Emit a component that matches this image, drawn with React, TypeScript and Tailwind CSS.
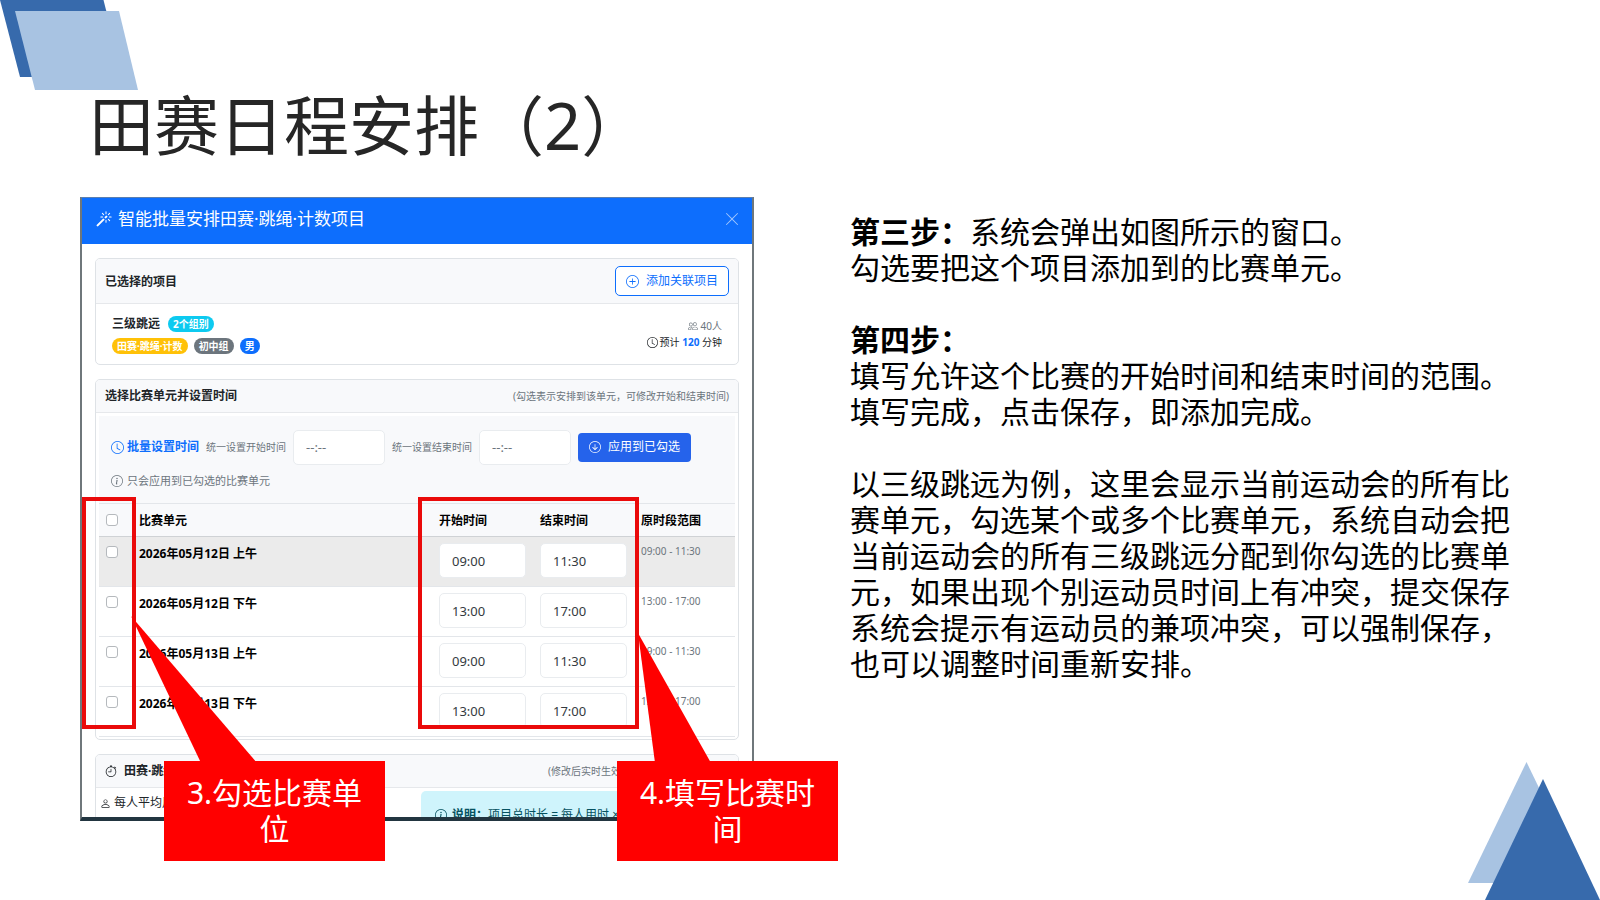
/**
 * App.tsx
 *
 * Training slide "田赛日程安排（2）": the batch scheduling dialog on the left with
 * two red callouts over it, and the written steps on the right.
 */
import { useState } from 'react';
import type { ReactNode } from 'react';
import {
  BsArrowDownCircle,
  BsClock,
  BsInfoCircle,
  BsMagic,
  BsPeople,
  BsPerson,
  BsPlusCircle,
  BsStopwatch,
  BsXLg,
} from 'react-icons/bs';

// ── Types ─────────────────────────────────────────────────────────────────────

interface Session {
  id: string;
  name: string;
  start: string;
  end: string;
  range: string;
}

// ── Data ──────────────────────────────────────────────────────────────────────

const SESSIONS: Session[] = [
  { id: 's1', name: '2026年05月12日 上午', start: '09:00', end: '11:30', range: '09:00 - 11:30' },
  { id: 's2', name: '2026年05月12日 下午', start: '13:00', end: '17:00', range: '13:00 - 17:00' },
  { id: 's3', name: '2026年05月13日 上午', start: '09:00', end: '11:30', range: '09:00 - 11:30' },
  { id: 's4', name: '2026年05月13日 下午', start: '13:00', end: '17:00', range: '13:00 - 17:00' },
];

// ── Small parts ───────────────────────────────────────────────────────────────

function Badge({ className, children }: { className: string; children: ReactNode }) {
  return (
    <span className={`h-4 rounded-full px-[5px] text-[10px] leading-4 font-bold text-white ${className}`}>
      {children}
    </span>
  );
}

function Card({ header, children }: { header: ReactNode; children: ReactNode }) {
  return (
    <section className="overflow-hidden rounded-[5px] border border-[#dee2e6] bg-white">
      <div className="flex min-h-[33px] items-center justify-between border-b border-[#e6e8eb] bg-[#f8f9fb] px-[9px]">
        {header}
      </div>
      {children}
    </section>
  );
}

function TimeInput({ label, defaultValue, placeholder }: { label?: string; defaultValue?: string; placeholder?: string }) {
  return (
    <input
      type="text"
      aria-label={label}
      defaultValue={defaultValue}
      placeholder={placeholder}
      className="block h-[35px] w-full rounded-[5px] border border-[#e9ecef] bg-white px-3 text-[13px] text-[#343a40] placeholder:text-[#6c757d]"
    />
  );
}

function Check({ label, checked, onChange }: { label: string; checked: boolean; onChange: () => void }) {
  return (
    <input
      type="checkbox"
      aria-label={label}
      checked={checked}
      onChange={onChange}
      className="block size-3 appearance-none rounded-[3px] border border-[#b5b9bd] bg-white checked:bg-[#0d6efd]"
    />
  );
}

// ── Dialog ────────────────────────────────────────────────────────────────────

function SessionTable() {
  const [selected, setSelected] = useState<string[]>([]);
  const allSelected = selected.length === SESSIONS.length;

  const toggle = (id: string) => {
    setSelected((prev) => (prev.includes(id) ? prev.filter((s) => s !== id) : [...prev, id]));
  };

  return (
    <table className="w-full table-fixed border-collapse text-left text-xs text-black">
      <colgroup>
        <col className="w-[33px]" />
        <col />
        <col className="w-[101px]" />
        <col className="w-[101px]" />
        <col className="w-[101px]" />
      </colgroup>
      <thead>
        <tr className="h-[33px] border-t border-b border-t-[#e3e6ea] border-b-[#cfd2d5] bg-[#f8f9fb]">
          <th className="px-[7px]">
            <Check
              label="全选"
              checked={allSelected}
              onChange={() => setSelected(allSelected ? [] : SESSIONS.map((s) => s.id))}
            />
          </th>
          <th className="px-[7px] pt-[2px] font-bold">比赛单元</th>
          <th className="px-[7px] pt-[2px] font-bold">开始时间</th>
          <th className="px-[7px] pt-[2px] font-bold">结束时间</th>
          <th className="px-[7px] pt-[2px] font-bold">原时段范围</th>
        </tr>
      </thead>
      <tbody>
        {SESSIONS.map((s) => (
          <tr key={s.id} className="h-[50px] border-b border-[#e3e6ea] align-top first:bg-[#ebebeb]">
            <td className="px-[7px] pt-[9px]">
              <Check label={s.name} checked={selected.includes(s.id)} onChange={() => toggle(s.id)} />
            </td>
            <td className="px-[7px] pt-[9px] leading-4 font-bold">{s.name}</td>
            <td className="px-[7px] pt-[6px]">
              <TimeInput label={`${s.name} 开始时间`} defaultValue={s.start} />
            </td>
            <td className="px-[7px] pt-[6px]">
              <TimeInput label={`${s.name} 结束时间`} defaultValue={s.end} />
            </td>
            <td className="px-[7px] pt-[6px] text-[10px] leading-4 text-[#6c757d]">{s.range}</td>
          </tr>
        ))}
      </tbody>
    </table>
  );
}

function ScheduleDialog() {
  return (
    <div className="h-[624px] overflow-hidden border-x-2 border-t border-b-4 border-x-[#6f777b] border-t-[#5b7fb0] border-b-[#223540] bg-white text-[#212529]">
      <header className="flex h-[46px] items-center bg-[#0d6efd] pr-3 pb-1 pl-[14px] text-white">
        <BsMagic size={16} />
        <h2 className="ml-[6px] text-[17px] leading-6">智能批量安排田赛·跳绳·计数项目</h2>
        <button type="button" aria-label="关闭" className="ml-auto text-[#9ec5fe]">
          <BsXLg size={16} />
        </button>
      </header>

      <div className="flex flex-col gap-[14px] px-[13px] pt-[14px]">
        {/* Selected events */}
        <Card
          header={
            <div className="flex h-11 flex-1 items-center justify-between">
              <h3 className="pt-[2px] text-xs font-bold">已选择的项目</h3>
              <button
                type="button"
                className="flex h-[30px] items-center gap-[7px] rounded-[5px] border border-[#0d6efd] bg-white px-[10px] text-xs text-[#0d6efd]"
              >
                <BsPlusCircle size={13} />
                添加关联项目
              </button>
            </div>
          }
        >
          <div className="flex justify-between px-4 pt-3 pb-[10px]">
            <div className="flex flex-col gap-[6px]">
              <div className="flex items-center gap-2">
                <span className="text-xs leading-4 font-bold">三级跳远</span>
                <Badge className="bg-[#0dcaf0]">2个组别</Badge>
              </div>
              <div className="flex items-center gap-[6px]">
                <Badge className="bg-[#ffc107]">田赛·跳绳·计数</Badge>
                <Badge className="bg-[#6c757d]">初中组</Badge>
                <Badge className="bg-[#0d6efd]">男</Badge>
              </div>
            </div>
            <div className="flex flex-col items-end pt-[2px] text-[10px] leading-4">
              <span className="flex items-center gap-[3px] text-[#6c757d]">
                <BsPeople size={10} />
                40人
              </span>
              <span className="flex items-center gap-[2px]">
                <BsClock size={11} />
                <span>
                  预计 <strong className="text-[#0d6efd]">120</strong> 分钟
                </span>
              </span>
            </div>
          </div>
        </Card>

        {/* Session picker */}
        <Card
          header={
            <>
              <h3 className="text-xs font-bold">选择比赛单元并设置时间</h3>
              <span className="text-[10px] text-[#6c757d]">(勾选表示安排到该单元，可修改开始和结束时间)</span>
            </>
          }
        >
          <div className="px-[3px] pt-[3px] pb-[2px]">
            <div className="flex flex-col gap-2 bg-[#f8f9fb] px-3 pt-[13px] pb-[14px]">
              <div className="flex h-9 items-center gap-[7px] whitespace-nowrap">
                <span className="flex items-center gap-[3px] text-xs font-bold text-[#0d6efd]">
                  <BsClock size={13} />
                  批量设置时间
                </span>
                <label className="flex items-center gap-[7px] text-[10px] text-[#6c757d]">
                  统一设置开始时间
                  <span className="w-[92px]">
                    <TimeInput placeholder="--:--" />
                  </span>
                </label>
                <label className="flex items-center gap-[7px] text-[10px] text-[#6c757d]">
                  统一设置结束时间
                  <span className="w-[92px]">
                    <TimeInput placeholder="--:--" />
                  </span>
                </label>
                <button
                  type="button"
                  className="flex h-[29px] items-center gap-[7px] rounded bg-[#2563eb] px-[11px] text-xs text-white"
                >
                  <BsArrowDownCircle size={12} />
                  应用到已勾选
                </button>
              </div>
              <p className="flex items-center gap-1 text-[11px] leading-4 text-[#6c757d]">
                <BsInfoCircle size={12} />
                只会应用到已勾选的比赛单元
              </p>
            </div>
            <SessionTable />
          </div>
        </Card>

        {/* Duration settings */}
        <Card
          header={
            <>
              <h3 className="flex items-center gap-[7px] text-xs font-bold">
                <BsStopwatch size={12} />
                田赛·跳绳
              </h3>
              <span className="w-[181px] text-[10px] text-[#6c757d]">(修改后实时生效)</span>
            </>
          }
        >
          <div className="flex justify-between pt-[3px] pl-1 text-xs">
            <span className="flex h-6 items-center gap-[3px]">
              <BsPerson size={11} />
              每人平均用时
            </span>
            <div className="flex w-[317px] items-center gap-[5px] rounded-[5px] bg-[#cff4fc] px-[14px] py-4 leading-4 text-[#055160]">
              <BsInfoCircle size={12} />
              <span>
                <strong>说明：</strong>项目总时长 = 每人用时 ×
              </span>
            </div>
          </div>
        </Card>
      </div>
    </div>
  );
}

// ── Callouts ──────────────────────────────────────────────────────────────────

/** Red frames, pointer wedges and captions lying over the dialog. */
function Callouts() {
  return (
    <>
      <div className="pointer-events-none absolute top-[300px] left-[2px] h-[232px] w-[54px] border-4 border-[#ea0a0a]" />
      <div className="pointer-events-none absolute top-[300px] left-[338px] h-[232px] w-[221px] border-4 border-[#ea0a0a]" />
      <svg
        className="pointer-events-none absolute top-0 left-0"
        width="760"
        height="570"
        viewBox="0 0 760 570"
        fill="#ff0000"
        aria-hidden="true"
      >
        <path d="M51 419 L177 566 L121 566 Z" />
        <path d="M558 436 L631 566 L575 566 Z" />
      </svg>
      <p className="absolute top-[564px] left-[84px] flex h-[100px] w-[221px] items-center bg-[#ff0000] px-4 text-center text-[30px] leading-9 text-white">
        3.勾选比赛单位
      </p>
      <p className="absolute top-[564px] left-[537px] flex h-[100px] w-[221px] items-center bg-[#ff0000] px-4 text-center text-[30px] leading-9 text-white">
        4.填写比赛时间
      </p>
    </>
  );
}

// ── Slide ─────────────────────────────────────────────────────────────────────

export default function App() {
  return (
    <div className="relative min-h-screen overflow-hidden bg-white font-['Noto_Sans','Noto_Sans_CJK_SC',sans-serif]">
      <svg className="absolute top-0 left-0" width="140" height="92" viewBox="0 0 140 92" aria-hidden="true">
        <path d="M0 0 H103.5 L123 77 H20 Z" fill="#376aac" />
        <path d="M15 11 H119 L138 90 H35 Z" fill="#a8c3e2" />
      </svg>
      <svg className="absolute right-0 bottom-0" width="134" height="140" viewBox="0 0 134 140" aria-hidden="true">
        <path d="M60.5 2 L119 123 H2 Z" fill="#a8c3e2" />
        <path d="M77 19 L134 140 H19 Z" fill="#376aac" />
      </svg>

      <h1 className="relative pt-[85px] pl-[89px] text-[65px] leading-[80px] text-[#262626]">田赛日程安排（2）</h1>

      <main className="grid grid-cols-[674fr_680fr] gap-24 pt-8 pr-[70px] pl-20">
        <div className="relative">
          <ScheduleDialog />
          <Callouts />
        </div>

        <article className="flex flex-col gap-9 pt-[17px] text-[30px] leading-9 text-black">
          <p>
            <strong>第三步：</strong>系统会弹出如图所示的窗口。
            <br />
            勾选要把这个项目添加到的比赛单元。
          </p>
          <p>
            <strong>第四步：</strong>
            <br />
            填写允许这个比赛的开始时间和结束时间的范围。
            <br />
            填写完成，点击保存，即添加完成。
          </p>
          <p>
            以三级跳远为例，这里会显示当前运动会的所有比赛单元，勾选某个或多个比赛单元，系统自动会把当前运动会的所有三级跳远分配到你勾选的比赛单元，如果出现个别运动员时间上有冲突，提交保存系统会提示有运动员的兼项冲突，可以强制保存，也可以调整时间重新安排。
          </p>
        </article>
      </main>
    </div>
  );
}
